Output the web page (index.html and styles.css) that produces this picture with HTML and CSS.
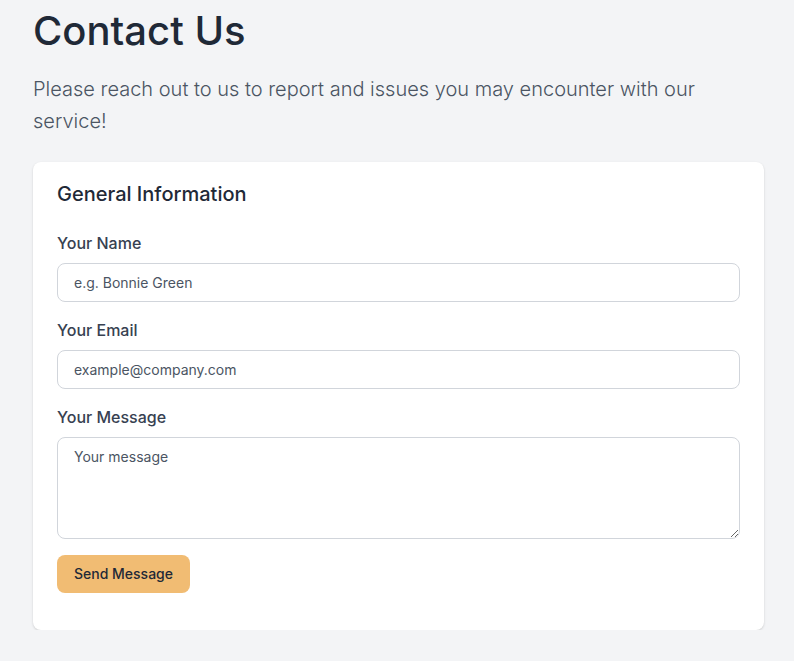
FILE: index.html
```html
<!DOCTYPE html>
<html lang="en">
<head>
<meta charset="utf-8">
<title>Contact Us</title>
<link rel="stylesheet" href="styles.css">
</head>
<body>
<main class="page">
  <h1 class="title">Contact Us</h1>
  <p class="lead">Please reach out to us to report and issues you may encounter with our service!</p>
  <section class="card">
    <h2 class="card-title">General Information</h2>
    <form class="form">
      <div class="field">
        <label class="label" for="name">Your Name</label>
        <input class="input" id="name" type="text" placeholder="e.g. Bonnie Green">
      </div>
      <div class="field">
        <label class="label" for="email">Your Email</label>
        <input class="input" id="email" type="email" placeholder="example@company.com">
      </div>
      <div class="field">
        <label class="label" for="message">Your Message</label>
        <textarea class="input textarea" id="message" placeholder="Your message"></textarea>
      </div>
      <button class="button" type="button">Send Message</button>
    </form>
  </section>
</main>
</body>
</html>
```

FILE: styles.css
```css
* { box-sizing: border-box; }
html, body { margin: 0; }
body {
  background: #f3f4f6;
  font-family: Inter, "Noto Sans", sans-serif;
  color: #1f2937;
}
.page {
  padding: 7px 30px 0 33px;
}
.title {
  margin: 0 0 18px;
  font-size: 40px;
  line-height: 48px;
  font-weight: 500;
  color: #1f2937;
}
.lead {
  margin: 0 0 25px;
  font-size: 20px;
  line-height: 32px;
  font-weight: 300;
  color: #4b5563;
}
.card {
  background: #fff;
  border-radius: 8px;
  box-shadow: 0 1px 3px rgba(0,0,0,0.1), 0 1px 2px rgba(0,0,0,0.06);
  padding: 18px 24px 37px;
}
.card-title {
  margin: 0 0 23px;
  font-size: 20px;
  line-height: 28px;
  font-weight: 500;
  color: #1f2937;
}
.field {
  display: flex;
  flex-direction: column;
  margin-bottom: 16px;
}
.label {
  font-size: 16px;
  line-height: 24px;
  font-weight: 500;
  color: #374151;
  margin-bottom: 8px;
}
.input {
  display: block;
  width: 100%;
  height: 39px;
  padding: 8px 16px;
  font-family: inherit;
  font-size: 14px;
  line-height: 20px;
  color: #111827;
  background: #fff;
  border: 1px solid #d1d5db;
  border-radius: 8px;
  outline: none;
}
.input::placeholder {
  color: #4b5563;
  opacity: 1;
}
.textarea {
  height: 102px;
  padding-top: 9px;
  resize: vertical;
}
.button {
  display: inline-block;
  padding: 9px 17px;
  font-family: inherit;
  font-size: 14px;
  line-height: 20px;
  font-weight: 500;
  color: #1f2937;
  background: #f1bc73;
  border: 0;
  border-radius: 8px;
  cursor: pointer;
}
```
